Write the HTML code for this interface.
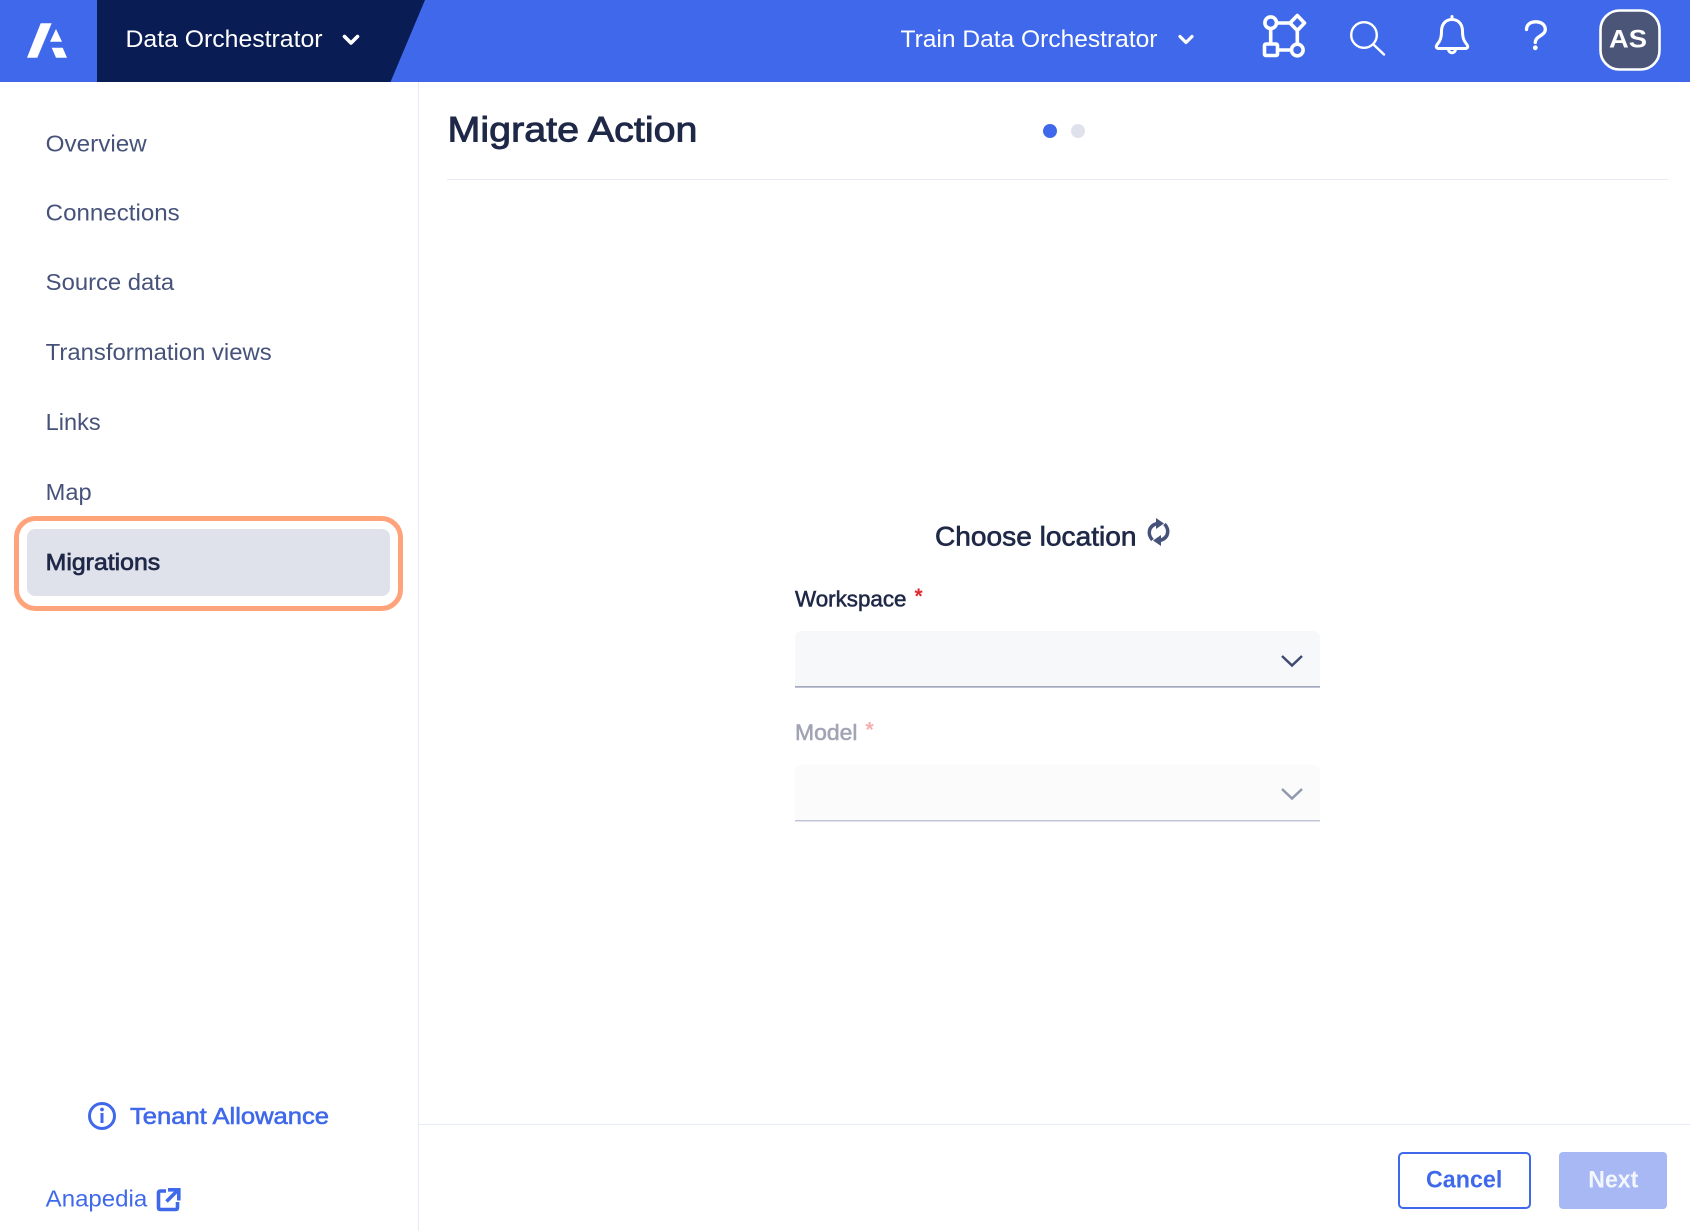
<!DOCTYPE html>
<html>
<head>
<meta charset="utf-8">
<title>Migrate Action</title>
<style>
html,body{margin:0;padding:0;background:#fff;width:1690px;height:1231px;overflow:hidden}
svg{display:block}
text{font-family:"Liberation Sans",sans-serif}
.n{font-size:23px;fill:#46527A}
.s{stroke-width:.45px}
</style>
</head>
<body>
<svg width="1690" height="1231" viewBox="0 0 1690 1231" xmlns="http://www.w3.org/2000/svg">
<rect width="1690" height="1231" fill="#fff"/>
<!-- header -->
<rect width="1690" height="82" fill="#3F69EA"/>
<polygon points="97,0 425,0 390.5,82 97,82" fill="#0A1C54"/>
<g fill="#fff">
<polygon points="40.7,23.3 51.7,23.3 37.3,57.7 27,57.7"/>
<polygon points="56,29 50,41.7 62,41.7"/>
<polygon points="51.7,47.7 62.7,47.7 67,57.7 56,57.7"/>
</g>
<text x="125.5" y="47" font-size="24" fill="#fff" textLength="197" lengthAdjust="spacingAndGlyphs">Data Orchestrator</text>
<path d="M344.5 36.5 L351 43 L357.5 36.5" fill="none" stroke="#fff" stroke-width="3.6" stroke-linecap="round" stroke-linejoin="round"/>
<text x="900.5" y="47" font-size="24" fill="#fff" textLength="257" lengthAdjust="spacingAndGlyphs">Train Data Orchestrator</text>
<path d="M1180 36.5 L1186 42.5 L1192 36.5" fill="none" stroke="#fff" stroke-width="3.2" stroke-linecap="round" stroke-linejoin="round"/>
<!-- workflow icon -->
<g fill="none" stroke="#fff" stroke-width="3.6" stroke-linejoin="round">
<circle cx="1270.7" cy="22.7" r="5.8"/>
<path d="M1297.3 15.5 L1304.5 23 L1297.3 30.5 L1290 23 Z"/>
<rect x="1264.5" y="44" width="13" height="11.5" rx="1.5"/>
<circle cx="1297.3" cy="50" r="5.8"/>
<path d="M1276.5 23 H1290 M1270.7 28.5 V44 M1297.3 30.5 V44.2 M1277.5 50 H1291.5"/>
</g>
<!-- search -->
<g fill="none" stroke="#fff" stroke-width="2.4" stroke-linecap="round">
<circle cx="1364" cy="35" r="12.8"/>
<path d="M1374 45 L1384 54.5"/>
</g>
<!-- bell -->
<g fill="none" stroke="#fff" stroke-width="3" stroke-linecap="round" stroke-linejoin="round">
<path d="M1452 19.5 C1445 19.5 1441.5 25 1441.5 31 C1441.5 38 1440 41 1437.5 44 C1435.5 46.5 1436 48.5 1439 48.5 H1465 C1468 48.5 1468.5 46.5 1466.5 44 C1464 41 1462.5 38 1462.5 31 C1462.5 25 1459 19.5 1452 19.5 Z"/>
<path d="M1452 16.5 V19"/>
<path d="M1448.5 49 C1448.5 54 1455.5 54 1455.5 49"/>
</g>
<!-- question -->
<path d="M1526.5 29.5 C1526.5 24.5 1530.5 21.8 1535.8 21.8 C1541.5 21.8 1545.3 25 1545.3 29.5 C1545.3 35.5 1535.3 36 1535.3 42.5" fill="none" stroke="#fff" stroke-width="3.3" stroke-linecap="round"/>
<circle cx="1535.3" cy="47.8" r="2.4" fill="#fff"/>
<!-- avatar -->
<rect x="1600.5" y="10.5" width="59" height="59" rx="19" fill="#4A5578" stroke="#fff" stroke-width="2.6"/>
<text x="1609" y="47.7" font-size="25" font-weight="700" fill="#fff" textLength="38" lengthAdjust="spacingAndGlyphs">AS</text>

<!-- sidebar -->
<rect x="418" y="82" width="1" height="1149" fill="#E6EAF5"/>
<text class="n" x="45.7" y="151.5" textLength="101" lengthAdjust="spacingAndGlyphs">Overview</text>
<text class="n" x="45.7" y="220.7" textLength="134" lengthAdjust="spacingAndGlyphs">Connections</text>
<text class="n" x="45.7" y="290" textLength="128.5" lengthAdjust="spacingAndGlyphs">Source data</text>
<text class="n" x="45.7" y="360" textLength="226" lengthAdjust="spacingAndGlyphs">Transformation views</text>
<text class="n" x="45.7" y="430" textLength="55" lengthAdjust="spacingAndGlyphs">Links</text>
<text class="n" x="45.7" y="500" textLength="46" lengthAdjust="spacingAndGlyphs">Map</text>
<rect x="16.5" y="518.5" width="384" height="90" rx="19" fill="none" stroke="#FFA37B" stroke-width="5"/>
<rect x="27" y="529" width="363" height="67" rx="8" fill="#DFE2EB"/>
<text class="n s" x="45.7" y="570" style="fill:#1F2847;stroke:#1F2847;stroke-width:.7px" textLength="114.5" lengthAdjust="spacingAndGlyphs">Migrations</text>

<!-- tenant -->
<circle cx="102" cy="1116" r="12.5" fill="none" stroke="#3F69EA" stroke-width="3"/>
<circle cx="102" cy="1109.5" r="1.9" fill="#3F69EA"/>
<rect x="100.5" y="1113" width="3" height="10" fill="#3F69EA"/>
<text x="130" y="1124" font-size="23" fill="#3F69EA" stroke="#3F69EA" style="stroke-width:.6px" textLength="199" lengthAdjust="spacingAndGlyphs">Tenant Allowance</text>
<text x="45.7" y="1206.7" font-size="23" fill="#3F69EA" textLength="101.5" lengthAdjust="spacingAndGlyphs">Anapedia</text>
<g fill="none" stroke="#3F69EA" stroke-width="3.6">
<path d="M166 1191 H160.5 Q158.5 1191 158.5 1193 V1207.5 Q158.5 1209.5 160.5 1209.5 H175.5 Q177.5 1209.5 177.5 1207.5 V1202"/>
<path d="M166.5 1201.5 L177.5 1190.5"/>
<path d="M168 1189.8 H178.8 V1200.5"/>
</g>

<!-- main title -->
<text x="447.5" y="141.7" font-size="35.5" fill="#1F2847" stroke="#1F2847" style="stroke-width:.9px" textLength="250" lengthAdjust="spacingAndGlyphs">Migrate Action</text>
<circle cx="1050" cy="131" r="7" fill="#3F69EA"/>
<circle cx="1078" cy="131" r="7" fill="#DFE2EB"/>
<rect x="447" y="179" width="1221" height="1" fill="#E9EBF2"/>

<!-- form -->
<text x="935" y="545.7" font-size="26.5" fill="#1F2847" stroke="#1F2847" style="stroke-width:.65px" textLength="201.5" lengthAdjust="spacingAndGlyphs">Choose location</text>
<g fill="none" stroke="#46527A" stroke-width="3.5">
<path d="M1152.5 540 C1147 534 1148.5 525.5 1157.5 523.5"/>
<path d="M1164.5 524 C1170 530 1168.5 538.5 1159.5 540.5"/>
</g>
<g fill="#46527A">
<polygon points="1156,518 1164,523.5 1156,529"/>
<polygon points="1161,535 1153,540.5 1161,546"/>
</g>

<text x="795" y="606.7" font-size="22" fill="#1F2847" stroke="#1F2847" style="stroke-width:.55px" textLength="111.5" lengthAdjust="spacingAndGlyphs">Workspace</text>
<text x="914.5" y="603" font-size="21" font-weight="700" fill="#E0282E">*</text>
<path d="M795 687 V639 Q795 631 803 631 H1312 Q1320 631 1320 639 V687 Z" fill="#F7F8FA"/>
<rect x="795" y="686.3" width="525" height="1.2" fill="#7E86A3"/>
<path d="M1282 656 L1292 665.5 L1302 656" fill="none" stroke="#3F4B73" stroke-width="2.5"/>

<text x="795" y="740" font-size="22" fill="#A0A4B4" stroke="#A0A4B4" style="stroke-width:.55px" textLength="62.5" lengthAdjust="spacingAndGlyphs">Model</text>
<text x="865.5" y="736.5" font-size="21" font-weight="700" fill="#F6AFAF">*</text>
<path d="M795 820.5 V772.5 Q795 764.5 803 764.5 H1312 Q1320 764.5 1320 772.5 V820.5 Z" fill="#FBFBFC"/>
<rect x="795" y="820.2" width="525" height="1.2" fill="#B2B9D2"/>
<path d="M1282 789 L1292 798.5 L1302 789" fill="none" stroke="#9198B0" stroke-width="2.5"/>

<!-- footer -->
<rect x="419" y="1124" width="1271" height="1" fill="#E7ECF6"/>
<rect x="1399" y="1153" width="131" height="55" rx="4" fill="#fff" stroke="#3F69EA" stroke-width="2"/>
<text x="1426" y="1187.7" font-size="24" font-weight="700" fill="#3F69EA" textLength="76.3" lengthAdjust="spacingAndGlyphs">Cancel</text>
<rect x="1559" y="1152" width="108" height="57" rx="4" fill="#A7B8F4"/>
<text x="1588.3" y="1187.7" font-size="24" font-weight="700" fill="#F4F6FE" textLength="50" lengthAdjust="spacingAndGlyphs">Next</text>
</svg>
</body>
</html>
